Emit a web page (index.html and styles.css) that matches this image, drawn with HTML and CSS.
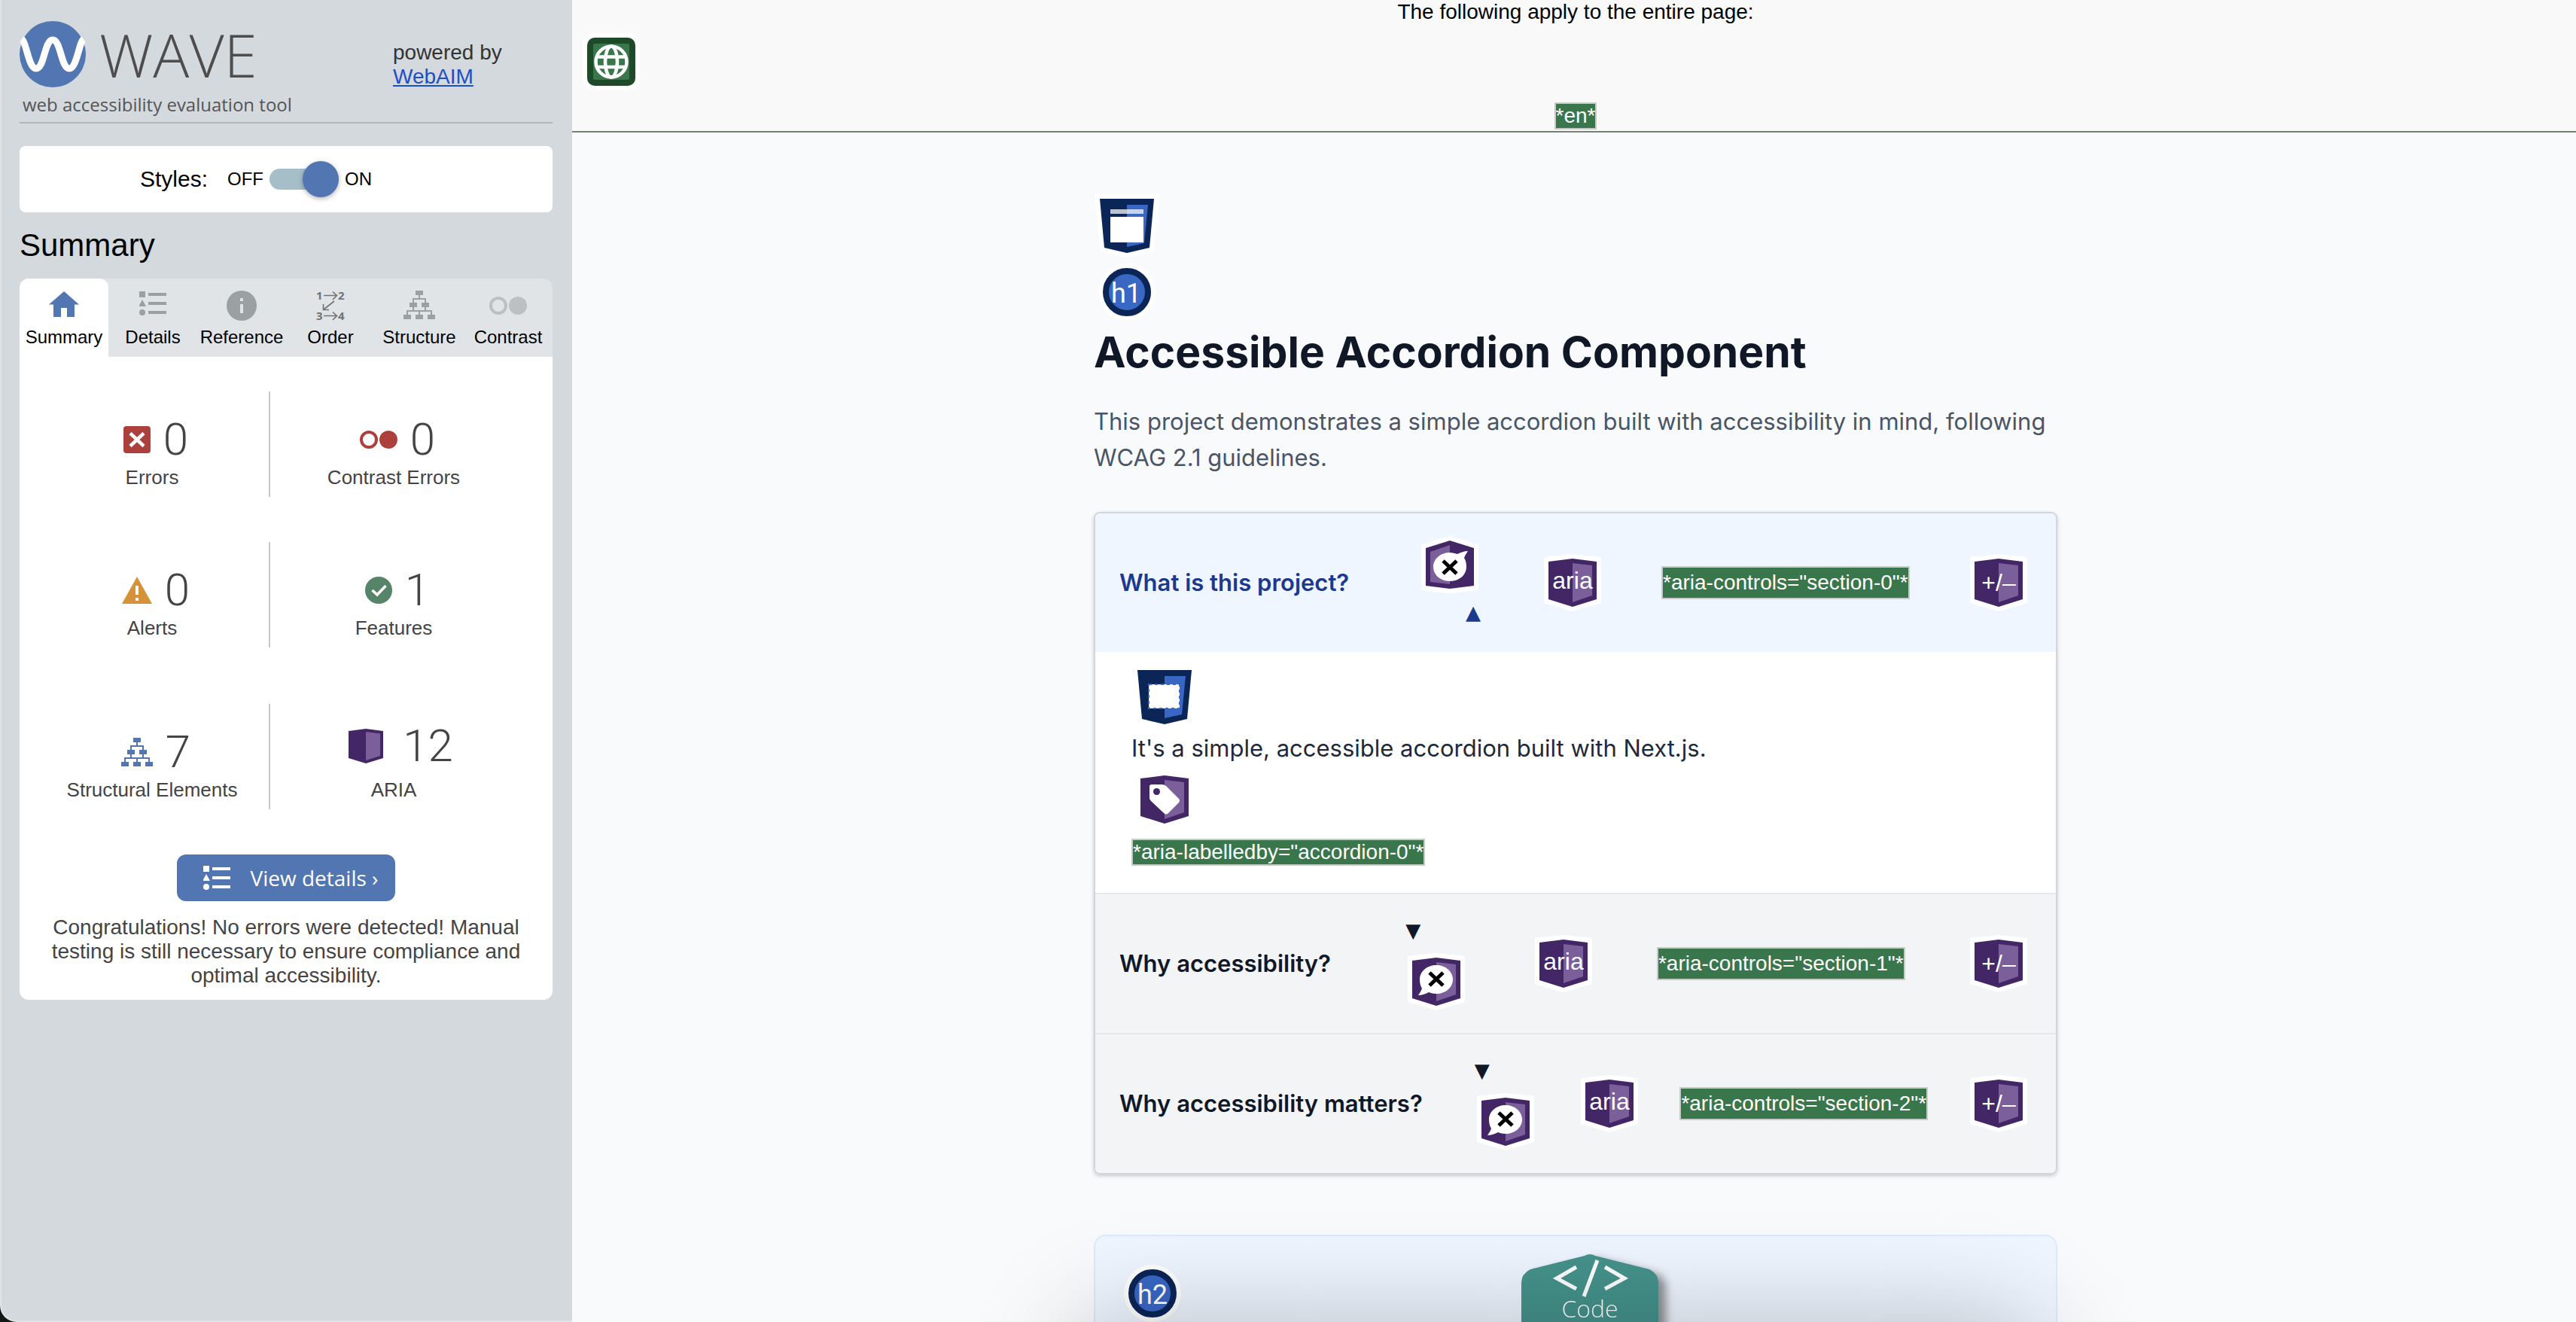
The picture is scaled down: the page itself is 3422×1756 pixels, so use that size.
FILE: index.html
```html
<!DOCTYPE html>
<html lang="en">
<head>
<meta charset="utf-8">
<title>WAVE Report - Accessible Accordion Component</title>
<link rel="stylesheet" href="styles.css">
</head>
<body>
<svg class="defs" aria-hidden="true">
  <defs>
    <symbol id="i-shield" viewBox="0 0 76 76">
      <path fill="#fff" d="M38 0 76 4V65L38 76 0 65V4z"/>
      <path fill="#432666" d="M38 6 70 10V60L38 70 6 60V10z"/>
      <path fill="#7a5f9a" d="M38 12 64 15V55L38 64z"/>
    </symbol>
    <symbol id="i-landmark" viewBox="0 0 88 88">
      <path fill="#fff" d="M1 2H87L79 79 44 86 9 79z"/>
      <path fill="#0b2556" d="M8 8H80L74 73 44 80 14 73z"/>
      <path fill="#3867c4" d="M44 16H72L67 67 44 72z"/>
    </symbol>
    <symbol id="i-heading" viewBox="0 0 76 76">
      <circle cx="38" cy="38" r="38" fill="#fff"/>
      <circle cx="38" cy="38" r="28" fill="#3867c4" stroke="#0b2556" stroke-width="8"/>
    </symbol>
    <symbol id="i-speech" viewBox="0 0 76 76">
      <use href="#i-shield"/>
      <path fill="#fff" d="M38 16c12 0 22 8 22 19S50 54 38 54c-4 0-7-1-10-2-4 2-9 4-14 4 2-3 4-6 5-9-2-3-3-7-3-12 0-11 10-19 22-19z"/>
      <path stroke="#000" stroke-width="5" fill="none" d="M29 26 47 43M47 26 29 43"/>
    </symbol>
    <symbol id="i-list" viewBox="0 0 36 32">
      <path fill="currentColor" d="M0 0h8v8H0zM4 11 9 20H-1zM12 2h24v4H12zM12 14h24v4H12zM12 26h24v4H12z"/>
      <circle cx="4" cy="28" r="4" fill="currentColor"/>
    </symbol>
    <symbol id="i-tree" viewBox="0 0 42 38">
      <path fill="currentColor" d="M16 0h10v6H16zM8 16h10v6H8zM24 16h10v6H24zM0 32h10v6H0zM16 32h10v6H16zM32 32h10v6H32z"/>
      <path stroke="currentColor" stroke-width="2" fill="none" d="M21 5v6M13 17v-6h16v6M13 21v6M29 21v6M5 33v-6h32v6M21 27v6"/>
    </symbol>
    <symbol id="i-contrast" viewBox="0 0 50 24">
      <circle cx="12" cy="12" r="10" fill="none" stroke="currentColor" stroke-width="4"/>
      <circle cx="38" cy="12" r="12" fill="currentColor"/>
    </symbol>
  </defs>
</svg>

<aside class="sidebar">
  <header class="brand">
    <div class="brand-main">
      <div class="brand-logo">
        <svg width="88" height="88" viewBox="0 0 88 88" aria-hidden="true">
          <circle cx="44" cy="44" r="44" fill="#5276b1"/>
          <path d="M3 24C9 28 12 63 22 63 33 63 33 25 44 25 55 25 55 63 66 63 76 63 79 28 85 24" fill="none" stroke="#fff" stroke-width="9"/>
        </svg>
        <span class="brand-name">WAVE</span>
      </div>
      <p class="brand-tagline">web accessibility evaluation tool</p>
    </div>
    <p class="brand-powered">powered by<br><a href="#">WebAIM</a></p>
  </header>

  <div class="styles-toggle">
    <span class="styles-title">Styles:</span>
    <label class="styles-switch" for="styles-on">
      <span>OFF</span>
      <input type="checkbox" id="styles-on" checked>
      <span>ON</span>
    </label>
  </div>

  <h2 class="sidebar-title">Summary</h2>

  <div class="tabs">
    <button class="tab tab--active" type="button">
      <svg width="40" height="40" viewBox="0 0 40 40"><path fill="#5276b1" d="M20 1 40 18.500H34V35H24V23H16V35H6V18.500H0z"/></svg>
      <span>Summary</span>
    </button>
    <button class="tab" type="button">
      <svg width="40" height="40" viewBox="-2 -1 40 40"><use href="#i-list" width="36" height="32"/></svg>
      <span>Details</span>
    </button>
    <button class="tab" type="button">
      <svg width="40" height="40" viewBox="0 0 40 40"><circle cx="20" cy="20" r="20" fill="currentColor"/><path fill="#e0e4e7" d="M18 10h4v4h-4zM18 18h4v12h-4z"/></svg>
      <span>Reference</span>
    </button>
    <button class="tab tab--order" type="button">
      <svg width="40" height="40" viewBox="0 0 40 40">
        <g fill="currentColor" font-size="15"><text x="1" y="12">1</text><text x="30" y="12">2</text><text x="1" y="39">3</text><text x="30" y="39">4</text></g>
        <path fill="none" stroke="currentColor" stroke-width="1.600" d="M11 6.500H28M23 1.500l5.500 5L23 12M25 14 11 25M10.500 18v7.500H18M11 33.500H28M23 28.500l5.500 5L23 39"/>
      </svg>
      <span>Order</span>
    </button>
    <button class="tab" type="button">
      <svg width="42" height="40" viewBox="0 0 42 40"><use href="#i-tree" width="42" height="38"/></svg>
      <span>Structure</span>
    </button>
    <button class="tab tab--contrast" type="button">
      <svg width="50" height="40" viewBox="0 0 50 40"><use href="#i-contrast" y="8" width="50" height="24"/></svg>
      <span>Contrast</span>
    </button>
  </div>

  <section class="panel">
    <ul class="stats">
      <li class="stat">
        <div class="stat-value"><svg width="36" height="36" viewBox="0 0 36 36"><rect width="36" height="36" rx="4" fill="#ac403d"/><path d="M9 9.500 27 26.500M27 9.500 9 26.500" stroke="#fff" stroke-width="4.500"/></svg><span>0</span></div>
        <div class="stat-label">Errors</div>
      </li>
      <li class="stat">
        <div class="stat-value"><svg class="c-red" width="50" height="24"><use href="#i-contrast"/></svg><span>0</span></div>
        <div class="stat-label">Contrast Errors</div>
      </li>
      <li class="stat">
        <div class="stat-value"><svg width="40" height="36" viewBox="0 0 40 36"><path fill="#d69238" d="M20 0 40 36H0z"/><path fill="#fff" d="M18 12h4v12h-4zM18 28h4v4h-4z"/></svg><span>0</span></div>
        <div class="stat-label">Alerts</div>
      </li>
      <li class="stat">
        <div class="stat-value"><svg width="36" height="36" viewBox="0 0 36 36"><circle cx="18" cy="18" r="18" fill="#558468"/><path d="M9.500 18 16 24 27.500 12" fill="none" stroke="#fff" stroke-width="3.500"/></svg><span>1</span></div>
        <div class="stat-label">Features</div>
      </li>
      <li class="stat stat--last">
        <div class="stat-value"><svg class="c-blue" width="42" height="38"><use href="#i-tree"/></svg><span>7</span></div>
        <div class="stat-label">Structural Elements</div>
      </li>
      <li class="stat stat--last stat--raised">
        <div class="stat-value"><svg width="64" height="64" viewBox="0 0 64 64"><path fill="#432666" d="M32 9 55 12V48L32 55 9 48V12z"/><path fill="#7a5f9a" d="M32 13 51 15.500V45L32 51z"/></svg><span>12</span></div>
        <div class="stat-label">ARIA</div>
      </li>
    </ul>
    <button class="view-details" type="button">
      <svg width="36" height="32"><use href="#i-list"/></svg>
      View details ›
    </button>
    <p class="congrats">Congratulations! No errors were detected! Manual testing is still necessary to ensure compliance and optimal accessibility.</p>
  </section>
</aside>

<div class="page">
  <div class="page-notes">
    <p>The following apply to the entire page:</p>
    <svg class="globe" width="76" height="76" viewBox="0 0 76 76" aria-hidden="true">
      <rect width="76" height="76" rx="16" fill="#fff"/>
      <rect x="6" y="6" width="64" height="64" rx="10" fill="#1f4a2a"/>
      <rect x="14" y="14" width="48" height="48" rx="2" fill="#39764c"/>
      <g fill="none" stroke="#fff" stroke-width="4.500"><circle cx="38" cy="38" r="20.500"/><ellipse cx="38" cy="38" rx="8" ry="20.500"/><path d="M19 31.500H57M19 45H57"/></g>
    </svg>
    <div class="lang-row"><span class="note">*en*</span></div>
  </div>

  <main class="content">
    <svg class="icon-block" viewBox="0 0 88 88" aria-hidden="true">
      <use href="#i-landmark"/>
      <path fill="#fff" d="M22 32H66V66H22z"/><path fill="#fff" fill-opacity=".72" d="M22 22H66V28H22z"/>
    </svg>
    <svg class="icon-block icon-pad" viewBox="0 0 76 76"><use href="#i-heading"/><text class="icon-text-lg" x="37" y="52">h1</text></svg>
    <h1>Accessible Accordion Component</h1>
    <p class="lead">This project demonstrates a simple accordion built with accessibility in mind, following WCAG 2.1 guidelines.</p>

    <div class="accordion">
      <div class="item">
        <button class="item-head item-head--open" id="accordion-0" type="button" aria-controls="section-0" aria-expanded="true">
          <span>What is this project?</span>
          <span class="chevron"><span class="chevron-mark">▼</span><svg class="icon-block icon-pad" viewBox="0 0 76 76"><use href="#i-speech"/></svg></span>
          <svg class="icon-block icon-pad" viewBox="0 0 76 76"><use href="#i-shield"/><text class="icon-text" x="38" y="46">aria</text></svg>
          <span class="note note--tall">*aria-controls="section-0"*</span>
          <svg class="icon-block icon-pad" viewBox="0 0 76 76"><use href="#i-shield"/><text class="icon-text" x="38" y="49">+/–</text></svg>
        </button>
        <div class="item-body" id="section-0">
          <svg class="icon-block" viewBox="0 0 88 88" aria-hidden="true">
            <use href="#i-landmark"/>
            <rect x="23" y="27" width="41" height="32" fill="#fff"/>
            <rect x="23" y="27" width="41" height="32" fill="none" stroke="#3867c4" stroke-width="2" stroke-dasharray="4 4"/>
          </svg>
          <p>It's a simple, accessible accordion built with Next.js.</p>
          <svg class="icon-block icon-pad" viewBox="0 0 76 76"><use href="#i-shield"/><path fill="#fff" d="M21 18H34Q38 18 40 20L57 37Q59 39 57 42L43 56Q40 59 37 56L20 40Q18 38 18 36V21Q18 18 21 18z"/><circle cx="27.500" cy="27.500" r="4.500" fill="#432666"/></svg>
          <span class="note note--body">*aria-labelledby="accordion-0"*</span>
        </div>
      </div>
      <div class="item">
        <button class="item-head" id="accordion-1" type="button" aria-controls="section-1" aria-expanded="false">
          <span>Why accessibility?</span>
          <span class="chevron"><span class="chevron-mark">▼</span><svg class="icon-block icon-pad" viewBox="0 0 76 76"><use href="#i-speech"/></svg></span>
          <svg class="icon-block icon-pad" viewBox="0 0 76 76"><use href="#i-shield"/><text class="icon-text" x="38" y="46">aria</text></svg>
          <span class="note note--tall">*aria-controls="section-1"*</span>
          <svg class="icon-block icon-pad" viewBox="0 0 76 76"><use href="#i-shield"/><text class="icon-text" x="38" y="49">+/–</text></svg>
        </button>
      </div>
      <div class="item">
        <button class="item-head" id="accordion-2" type="button" aria-controls="section-2" aria-expanded="false">
          <span>Why accessibility matters?</span>
          <span class="chevron"><span class="chevron-mark">▼</span><svg class="icon-block icon-pad" viewBox="0 0 76 76"><use href="#i-speech"/></svg></span>
          <svg class="icon-block icon-pad" viewBox="0 0 76 76"><use href="#i-shield"/><text class="icon-text" x="38" y="46">aria</text></svg>
          <span class="note note--tall">*aria-controls="section-2"*</span>
          <svg class="icon-block icon-pad" viewBox="0 0 76 76"><use href="#i-shield"/><text class="icon-text" x="38" y="49">+/–</text></svg>
        </button>
      </div>
    </div>

    <section class="card">
      <svg class="icon-block icon-pad" viewBox="0 0 76 76"><use href="#i-heading"/><text class="icon-text-lg" x="38" y="52">h2</text></svg>
    </section>
  </main>
</div>

<button class="code-tab" type="button">
  <svg class="code-shape" viewBox="0 0 182 100" aria-hidden="true">
    <path fill="#45938c" d="M0 38Q0 26 12 20L84 2Q91-2 98 2L170 20Q182 26 182 38V100H0z"/>
    <path fill="none" stroke="#fff" stroke-width="5" d="M73 17 47 32 73 46M111 17 137 32 111 46M101 8 83 56"/>
  </svg>
  <span>Code</span>
</button>
<div class="dock-shade"></div>
</body>
</html>
```
FILE: styles.css
```css
* { box-sizing: border-box; margin: 0; padding: 0; }

html { background: #141716; }

body {
  display: flex;
  height: 100vh;
  overflow: hidden;
  background: linear-gradient(90deg, transparent 50%, #f9fafc 50%);
  font-family: "Liberation Sans", Arial, sans-serif;
}

button { border: 0; background: none; font: inherit; color: inherit; cursor: pointer; }
ul { list-style: none; }
svg { display: block; flex: none; overflow: visible; }
.defs { position: absolute; width: 0; height: 0; }

/* Sidebar */
.sidebar {
  flex: none;
  width: 760px;
  padding: 28px 26px 0 24px;
  background: #d4d9dd;
  border-left: 2px solid #dfe3e6;
  border-bottom: 2px solid #dfe3e6;
  border-bottom-left-radius: 22px;
}

.brand {
  display: flex;
  justify-content: space-between;
  border-bottom: 2px solid #b1b6ba;
}
.brand-logo { display: flex; align-items: center; gap: 18px; height: 88px; }
.brand-name { font: 300 80px/88px "Open Sans", sans-serif; color: #4d4d4d; }
.brand-tagline { padding-left: 4px; font: 24px/46px "Open Sans", sans-serif; color: #555; }
.brand-powered { width: 212px; padding-top: 26px; font-size: 28px; line-height: 32px; color: #333; }
.brand-powered a { color: #1f4fc4; }

.styles-toggle {
  display: flex;
  align-items: center;
  gap: 26px;
  height: 88px;
  margin-top: 30px;
  padding-left: 160px;
  background: #fff;
  border-radius: 8px;
}
.styles-title { font-size: 30px; }
.styles-switch { display: flex; align-items: center; gap: 8px; font-size: 24px; }
.styles-switch input {
  appearance: none;
  display: flex;
  align-items: center;
  justify-content: flex-end;
  width: 92px;
  height: 28px;
  background: #a5bec8;
  border-radius: 14px;
}
.styles-switch input::before {
  content: "";
  flex: none;
  width: 48px;
  height: 48px;
  background: #5276b1;
  border-radius: 50%;
  box-shadow: 0 2px 6px rgba(0, 0, 0, .3);
}

.sidebar-title { margin: 20px 0; font-size: 42px; font-weight: 400; line-height: 48px; }

.tabs {
  display: grid;
  grid-template-columns: repeat(6, 1fr);
  height: 104px;
  background: #e0e4e7;
  border-radius: 12px 12px 0 0;
}
.tab {
  display: flex;
  flex-direction: column;
  align-items: center;
  gap: 6px;
  padding-top: 16px;
  border-radius: 12px 12px 0 0;
  font-size: 24px;
  line-height: 32px;
}
.tab svg { color: #9ba0a3; }
.tab--active { background: #fff; }
.tab--order svg { color: #6f7375; font-family: "Open Sans", sans-serif; font-weight: 700; }
.tab--contrast svg { color: #bcc0c2; }

.panel {
  display: flex;
  flex-direction: column;
  align-items: center;
  padding: 46px 32px 16px;
  background: #fff;
  border-radius: 0 0 12px 12px;
}
.stats {
  display: grid;
  grid-template-columns: repeat(2, 312px);
  gap: 60px 8px;
  align-self: flex-start;
  margin-left: -11px;
  color: #444;
}
.stat {
  display: flex;
  flex-direction: column;
  height: 140px;
  padding-top: 32px;
  text-align: center;
}
.stat:nth-child(odd) { border-right: 2px solid #c8c8c8; }
.stat--last { margin-top: 15px; }
.stat--raised { padding-top: 24px; gap: 8px; }
.stat-value {
  display: flex;
  align-items: center;
  justify-content: center;
  gap: 17px;
  padding-left: 10px;
  font: 300 60px/64px Roboto, sans-serif;
}
.stat-label { font-size: 26px; line-height: 36px; }
.c-red { color: #ac403d; }
.c-blue { color: #5276b1; }

.view-details {
  display: flex;
  align-items: center;
  gap: 26px;
  height: 62px;
  margin-top: 60px;
  padding: 0 22px 0 35px;
  background: #5276b1;
  border-radius: 12px;
  font: 28px/36px "Open Sans", sans-serif;
  color: #fff;
}
.congrats { margin-top: 19px; font-size: 28px; line-height: 32px; text-align: center; color: #444; }

/* Evaluated page */
.page { flex: 1; min-width: 0; overflow: hidden; background: #f9fafc; }

.page-notes {
  height: 176px;
  padding-left: 4px;
  background: #f9f9f9;
  border-bottom: 2px solid #757f73;
  font-size: 28px;
  line-height: 32px;
  text-align: center;
}
.globe { margin: 12px 0 16px 10px; }

.note {
  display: inline-block;
  border: 2px solid #c8cac8;
  background: #39764c;
  font: 28px/32px "Liberation Sans", Arial, sans-serif;
  color: #fff;
  white-space: nowrap;
}
.note--tall { line-height: 40px; }
.note--body { margin-top: 8px; }

.content {
  width: 1284px;
  margin: 0 auto;
  padding: 80px 0 0 4px;
  font-family: Inter, sans-serif;
  font-size: 31px;
  line-height: 48px;
}

.icon-block { width: 88px; height: 88px; }
.icon-pad { padding: 6px; }
.icon-text, .icon-text-lg { fill: #fff; text-anchor: middle; }
.icon-text { font: 32px "Liberation Sans", Arial, sans-serif; }
.icon-text-lg { font: 36px Roboto, sans-serif; }

h1 { font-size: 57px; font-weight: 700; line-height: 72px; color: #101828; }
.lead { margin-top: 32px; color: #4a5565; }

.accordion {
  margin-top: 48px;
  overflow: hidden;
  border: 2px solid #d1d5dc;
  border-radius: 8px;
  box-shadow: 0 2px 6px rgba(0, 0, 0, .1), 0 2px 4px rgba(0, 0, 0, .1);
}
.item + .item { border-top: 2px solid #e5e7eb; }
.item-head {
  display: flex;
  align-items: center;
  justify-content: space-between;
  width: 100%;
  padding: 24px 32px;
  background: #f3f4f6;
  font-weight: 600;
  color: #101828;
}
.item-head--open { background: #eff6ff; color: #1c398e; }
.chevron { display: flex; flex-direction: column; align-items: flex-start; margin-left: 16px; }
.item-head--open .chevron { transform: rotate(180deg); }
.chevron-mark { padding-left: 3px; font: 26px/48px "DejaVu Sans", sans-serif; }

.item-body { height: 320px; padding: 16px 48px; background: #fff; color: #1e2939; }

.card {
  height: 400px;
  margin-top: 80px;
  padding: 32px;
  background: #eff6ff;
  border: 2px solid #dbeafe;
  border-radius: 16px;
}

/* Code drawer handle, pinned to the bottom edge of the window */
.code-tab {
  position: fixed;
  bottom: 0;
  left: calc(50% + 310px);
  width: 182px;
  height: 90px;
  padding-top: 54px;
  filter: drop-shadow(10px 6px 6px rgba(0, 0, 0, .4));
  font: 300 32px/36px "Open Sans", sans-serif;
  color: #fff;
}
.code-tab span { position: relative; }
.code-shape { position: absolute; top: 0; left: 0; width: 182px; }

.dock-shade {
  position: fixed;
  bottom: -200px;
  left: 42%;
  width: 37%;
  height: 200px;
  box-shadow: 0 0 140px rgba(0, 0, 0, .25);
  pointer-events: none;
}
```
